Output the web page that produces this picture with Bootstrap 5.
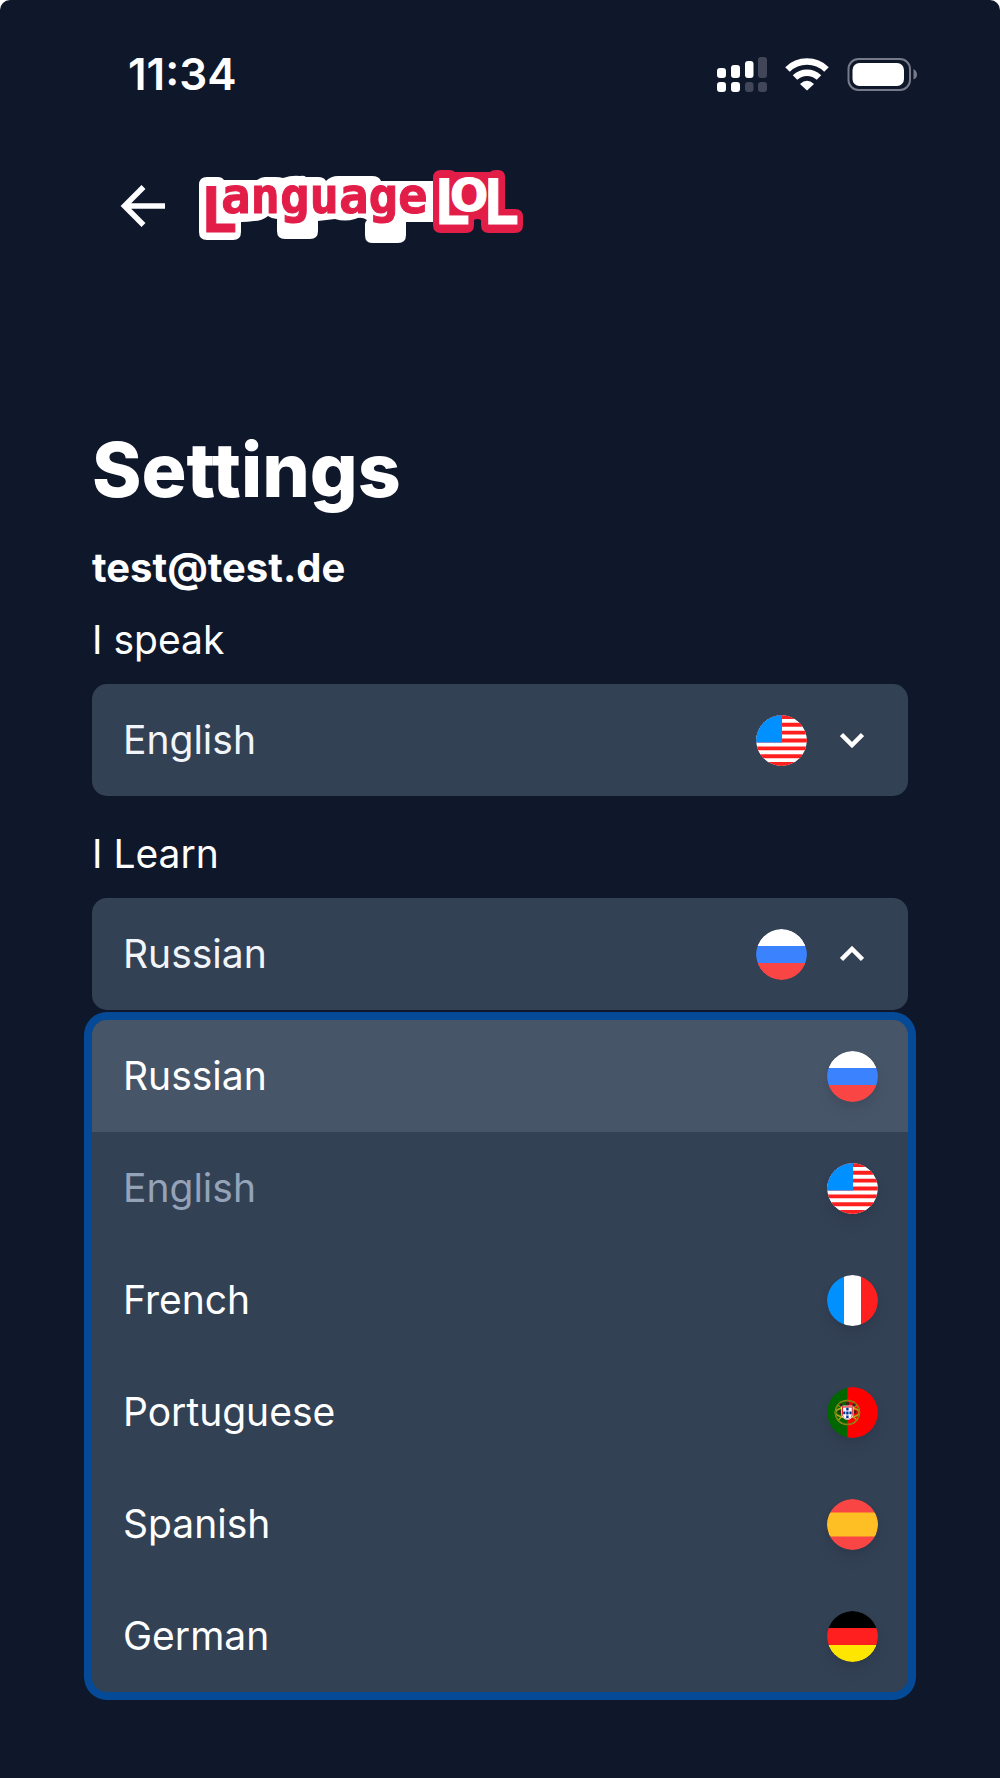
<!DOCTYPE html>
<html lang="en">
<head>
<meta charset="utf-8">
<meta name="viewport" content="width=device-width, initial-scale=1">
<title>LanguageLOL – Settings</title>
<link href="https://cdn.jsdelivr.net/npm/bootstrap@5.3.0/dist/css/bootstrap.min.css" rel="stylesheet">
<style>
  html { background: #fff; }
  body { background: transparent; font-family: Inter, "Liberation Sans", sans-serif; color: #fff; }
  .phone { background: #0f172a; border-radius: 10px 10px 0 0; padding: 47px 92px 78px; }
  .status { padding: 0 0 0 36px; height: 54px; margin-right: -10px; }
  .clock { font-size: 44px; line-height: 54px; font-weight: 600; }
  .brandbar { padding-left: 28px; margin-top: 61px; height: 88px; gap: 25px; }
  .back { line-height: 0; }
  .page-title { font-size: 75px; line-height: 88px; font-weight: 800; margin: 176px 0 0; }
  .account { font-size: 40px; line-height: 56px; font-weight: 700; margin: 26px 0 0; }
  .field-name { font-size: 39px; line-height: 56px; padding: 16px 0; display: block; }
  .picker + .field-name, .field + .field-name { padding-top: 30px; }
  .picker { appearance: none; height: 112px; border: 0; border-radius: 15px; background: #334155; color: #f1f5f9;
            font-size: 39px; line-height: 56px; padding: 28px 170px 28px 31px; }
  .picker:focus { box-shadow: 0 0 0 8px #054a96; }
  .picker-icons { top: 0; bottom: 0; right: 44px; gap: 33px; pointer-events: none; }
  .menu { margin-top: 10px; border-radius: 15px; box-shadow: 0 0 0 8px #054a96; background: #334155; }
  .menu .list-group-item { height: 112px; border: 0; background: #334155; color: #fff; padding: 0 30px 0 31px;
          font-size: 39px; line-height: 56px; }
  .menu .list-group-item.chosen { background: #475569; }
  .menu .list-group-item:first-child { border-radius: 15px 15px 0 0; }
  .menu .list-group-item:last-child { border-radius: 0 0 15px 15px; }
  .menu .list-group-item:disabled { color: #94a3b8; }
  .flag { width: 51px; height: 51px; border-radius: 50%; display: block; }
  .menu .flag { box-shadow: 0 10px 15px rgba(0,0,0,.06), 0 4px 6px rgba(0,0,0,.05); }
  .wordmark { overflow: visible; }
  .wordmark text { font-family: "DejaVu Sans Mono", monospace; font-weight: 700; }
  .wordmark .round-o { font-family: "DejaVu Sans", sans-serif; }
</style>
<script src="https://cdn.jsdelivr.net/npm/bootstrap@5.3.0/dist/js/bootstrap.bundle.min.js"></script>
</head>
<body>
<svg width="0" height="0" class="position-absolute" aria-hidden="true">
  <defs>
    <clipPath id="disc"><circle cx="25.5" cy="25.5" r="25.5"/></clipPath>
    <symbol id="us" viewBox="0 0 51 51"><g clip-path="url(#disc)"><path fill="#fff" d="M0 0h51v51H0z"/><path stroke="#ff1f1f" stroke-width="3.92" d="M0 1.96h51M0 9.8h51M0 17.65h51M0 25.5h51M0 33.35h51M0 41.2h51M0 49.04h51"/><path fill="#0090ff" d="M0 0h26v27.4H0z"/></g></symbol>
    <symbol id="ru" viewBox="0 0 51 51"><g clip-path="url(#disc)"><path fill="#fff" d="M0 0h51v17H0z"/><path fill="#3b82ff" d="M0 17h51v17H0z"/><path fill="#fa4545" d="M0 34h51v17H0z"/></g></symbol>
    <symbol id="fr" viewBox="0 0 51 51"><g clip-path="url(#disc)"><path fill="#0090ff" d="M0 0h17v51H0z"/><path fill="#fff" d="M17 0h17v51H17z"/><path fill="#ff1f1f" d="M34 0h17v51H34z"/></g></symbol>
    <symbol id="es" viewBox="0 0 51 51"><g clip-path="url(#disc)"><path fill="#fa4545" d="M0 0h51v51H0z"/><path fill="#fdbf24" d="M0 13.5h51v24H0z"/></g></symbol>
    <symbol id="de" viewBox="0 0 51 51"><g clip-path="url(#disc)"><path d="M0 0h51v17H0z"/><path fill="#ff1f1f" d="M0 17h51v17H0z"/><path fill="#ffe600" d="M0 34h51v17H0z"/></g></symbol>
    <symbol id="pt" viewBox="0 0 51 51"><g clip-path="url(#disc)"><path fill="#060" d="M0 0h20.4v51H0z"/><path fill="red" d="M20.4 0H51v51H20.4z"/>
      <g fill="none" stroke="#b3a81c" stroke-width="1.5"><circle cx="20.4" cy="25.5" r="12"/><ellipse cx="20.4" cy="25.5" rx="12" ry="5"/><path d="M11 18l19 15M11 33l19-15"/></g>
      <circle cx="20.4" cy="25.5" r="12" fill="none" stroke="#3d3a00" stroke-width=".5"/>
      <path fill="#e00d1a" stroke="#fff" stroke-width=".8" d="M14.6 19h11.6v7.500a5.800 6 0 0 1-11.600 0z"/>
      <path fill="#fff" d="M16 20.500h8.800v7a4.400 4.600 0 0 1-8.800 0z"/>
      <path fill="#039" d="M19.200 20.800h2.400v2.800h-2.400zM19.200 24.600h2.400v2.800h-2.400zM19.200 28.400h2.400v2.800h-2.400zM16.200 24.600h2.200v2.600h-2.200zM22.400 24.600h2.200v2.600h-2.200z"/>
      <path fill="#402020" d="M12.500 16.500h3v3h-3zM19 15h3v3h-3zM25.500 16.500h3v3h-3zM11.500 23.500H14v3h-2.500zM26.900 23.500h2.600v3h-2.600z"/></g></symbol>
  </defs>
</svg>

<div class="phone min-vh-100">
  <div class="status d-flex align-items-center justify-content-between">
    <span class="clock">11:34</span>
    <svg width="202" height="36" viewBox="716 56 202 36" role="img" aria-label="Signal, Wi-Fi and battery">
      <g fill="#fff"><rect x="717" y="68" width="9" height="10" rx="3"/><rect x="731" y="65" width="9" height="13" rx="3"/><rect x="745" y="61" width="8.500" height="17" rx="3"/><rect x="717" y="82" width="9" height="10" rx="3"/><rect x="731" y="82" width="9" height="10" rx="3"/></g>
      <g fill="#414658"><rect x="758" y="57" width="9" height="21" rx="3"/><rect x="745" y="82" width="8.500" height="10" rx="3"/><rect x="758" y="82" width="9" height="10" rx="3"/></g>
      <g fill="none" stroke="#fff" stroke-width="6.500"><path d="M787.500 69.500a28 28 0 0 1 39 0"/><path d="M795 77.500a17.500 17.500 0 0 1 24 0"/></g>
      <path fill="#fff" d="M800 84q7-6.500 14 0l-7 6.500z"/>
      <rect x="848.500" y="59" width="61.500" height="31" rx="10" fill="none" stroke="#777b89" stroke-width="2"/>
      <rect x="852.500" y="63" width="51.500" height="23" rx="7" fill="#fff"/>
      <path fill="#777b89" d="M913.500 69q3.500 2 3.500 5.500t-3.500 5z"/>
    </svg>
  </div>

  <header class="brandbar d-flex align-items-center">
    <a href="#" class="back" aria-label="Back"><svg width="46" height="44" viewBox="120 184 46 44"><path d="M165 206h-40M143.500 187l-19 19 19 19" fill="none" stroke="#fff" stroke-width="5.500"/></svg></a>
    <a href="#" class="back" aria-label="LanguageLOL">
      <svg class="wordmark" width="340" height="88" viewBox="191 162 340 88">
        <path fill="#fff" d="M207 177H218Q222 177 224 180H257Q261 177 265 177H275Q280 177 283 178Q292 175 300 176Q304 175 306 177H318Q324 177 326 181Q331 176 338 176H372Q379 176 381 181H433V222H406V235Q406 243 398 243H372Q365 243 365 235V224Q365 222 367 220Q361 216 355 219Q345 222 335 219L318 221V231Q318 239 310 239H285Q277 239 277 231V219Q272 219 268 216Q262 221 254 221Q248 222 241 222V232Q241 240 233 240H207Q199 240 199 232V185Q199 177 207 177Z"/>
        <path fill="#e11d48" d="M441 170H449Q453 170 455 172H490Q492 170 496 170H498Q505 170 505 177V209H515Q523 209 523 217V225Q523 233 515 233H489Q481 233 481 225V220Q477 218 474 220V225Q474 233 466 233H441Q433 233 433 225V178Q433 170 441 170Z"/>
        <g fill="#e11d48" stroke="#e11d48" stroke-width="1">
          <text x="200" y="232" font-size="62">L</text>
          <text x="221" y="213" font-size="49">anguage</text>
        </g>
        <g fill="#fff" stroke="#fff" stroke-width="1">
          <text x="433" y="224" font-size="62">L</text>
          <text class="round-o" x="450" y="211" font-size="45">O</text>
          <text x="482" y="224" font-size="62">L</text>
        </g>
      </svg>
    </a>
  </header>

  <main>
    <h1 class="page-title">Settings</h1>
    <p class="account">test@test.de</p>

    <label class="field-name" for="speak">I speak</label>
    <div class="field position-relative">
      <select id="speak" class="picker w-100"><option>English</option><option>Russian</option></select>
      <div class="picker-icons position-absolute d-flex align-items-center">
        <svg class="flag"><use href="#us"/></svg>
        <svg width="24" height="16" viewBox="0 0 24 16"><path d="M1.500 2.500L12 13 22.500 2.500" fill="none" stroke="#fff" stroke-width="4.500"/></svg>
      </div>
    </div>

    <label class="field-name" for="learn">I Learn</label>
    <div class="field position-relative">
      <select id="learn" class="picker w-100"><option>Russian</option><option>French</option><option>Portuguese</option><option>Spanish</option><option>German</option></select>
      <div class="picker-icons position-absolute d-flex align-items-center">
        <svg class="flag"><use href="#ru"/></svg>
        <svg width="24" height="16" viewBox="0 0 24 16"><path d="M1.500 13.500L12 3l10.500 10.500" fill="none" stroke="#fff" stroke-width="4.500"/></svg>
      </div>
    </div>

    <div class="menu list-group" aria-label="I Learn">
      <button type="button" class="list-group-item chosen d-flex align-items-center justify-content-between">Russian<svg class="flag"><use href="#ru"/></svg></button>
      <button type="button" disabled class="list-group-item d-flex align-items-center justify-content-between">English<svg class="flag"><use href="#us"/></svg></button>
      <button type="button" class="list-group-item d-flex align-items-center justify-content-between">French<svg class="flag"><use href="#fr"/></svg></button>
      <button type="button" class="list-group-item d-flex align-items-center justify-content-between">Portuguese<svg class="flag"><use href="#pt"/></svg></button>
      <button type="button" class="list-group-item d-flex align-items-center justify-content-between">Spanish<svg class="flag"><use href="#es"/></svg></button>
      <button type="button" class="list-group-item d-flex align-items-center justify-content-between">German<svg class="flag"><use href="#de"/></svg></button>
    </div>
  </main>
</div>
</body>
</html>
